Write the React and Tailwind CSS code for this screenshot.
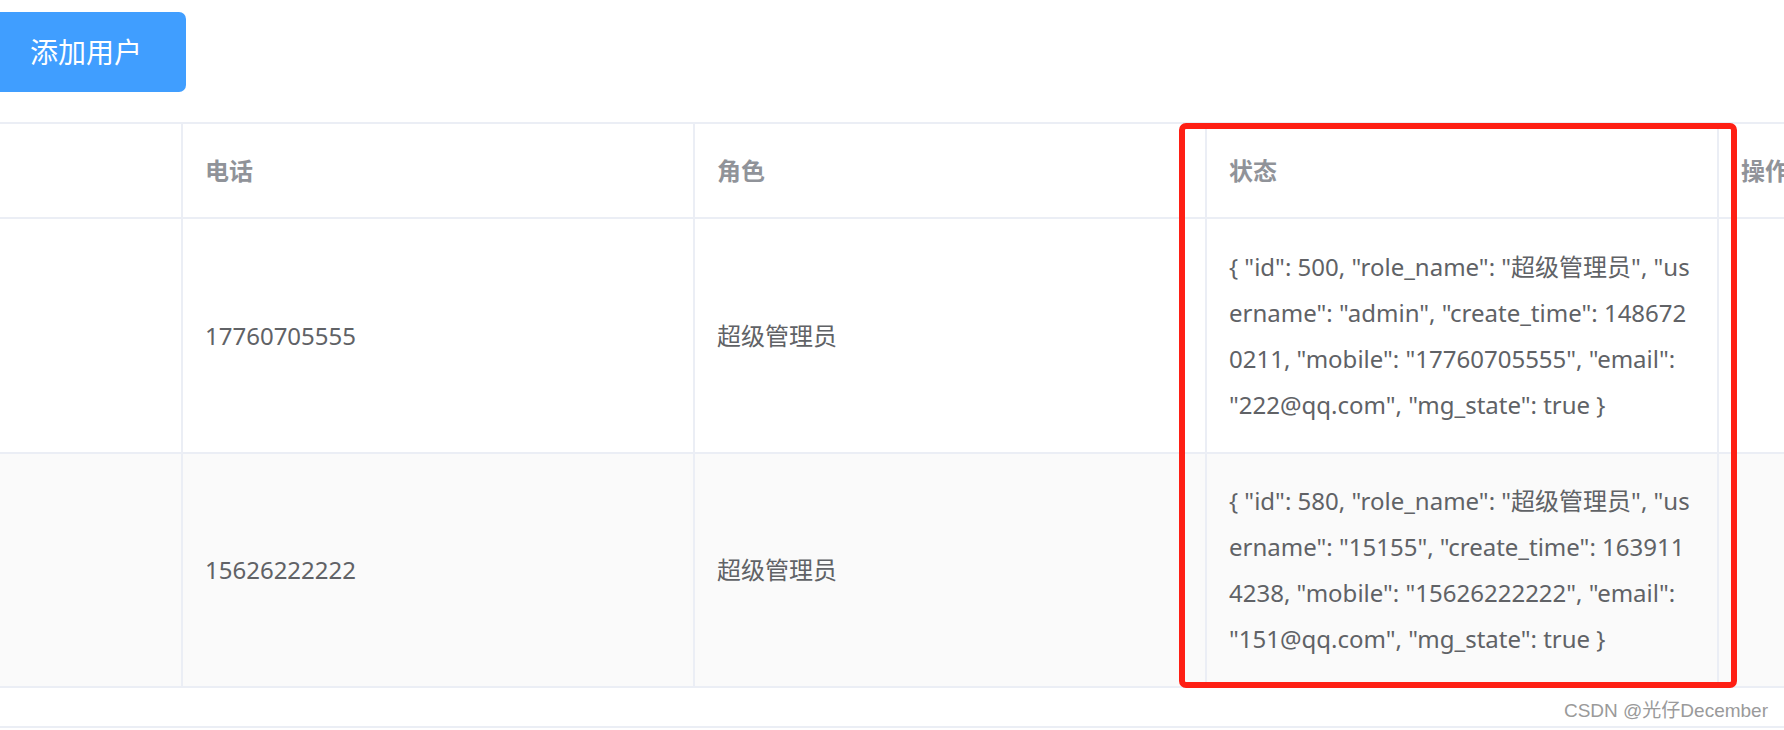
import React from "react";

const users = [
  {
    id: 500,
    role_name: "超级管理员",
    username: "admin",
    create_time: 1486720211,
    mobile: "17760705555",
    email: "222@qq.com",
    mg_state: true,
  },
  {
    id: 580,
    role_name: "超级管理员",
    username: "15155",
    create_time: 1639114238,
    mobile: "15626222222",
    email: "151@qq.com",
    mg_state: true,
  },
];

// same format element-ui shows when a row object is printed in a cell
const stringify = (u) =>
  `{ "id": ${u.id}, "role_name": "${u.role_name}", "username": "${u.username}", "create_time": ${u.create_time}, "mobile": "${u.mobile}", "email": "${u.email}", "mg_state": ${u.mg_state} }`;

const cellBase = "shrink-0 box-border flex items-center px-[22px] border-r-2 border-[#ebeef5]";

export default function App() {
  return (
    <div
      className="relative w-[1784px] h-[730px] overflow-hidden bg-white"
      style={{ fontFamily: '"Noto Sans", "Noto Sans CJK SC", sans-serif' }}
    >
      {/* toolbar */}
      <div className="pt-[12px]">
        <button className="-ml-[14px] h-[80px] px-[44px] rounded-[7px] bg-[#409eff] text-white text-[28px] leading-none">
          添加用户
        </button>
      </div>

      {/* table */}
      <div className="mt-[30px] w-[2300px] border-t-2 border-[#ebeef5]">
        <div className="flex h-[95px] border-b-2 border-[#ebeef5] text-[24px] font-bold text-[#909399] leading-[46px]">
          <div className={`${cellBase} w-[183px]`}></div>
          <div className={`${cellBase} w-[512px]`}>电话</div>
          <div className={`${cellBase} w-[512px]`}>角色</div>
          <div className={`${cellBase} w-[512px]`}>状态</div>
          <div className={`${cellBase} w-[512px]`}>操作</div>
        </div>

        {users.map((u, i) => (
          <div
            key={u.id}
            className={`flex border-b-2 border-[#ebeef5] text-[24px] text-[#606266] leading-[46px] ${
              i === 0 ? "h-[235px] bg-white" : "h-[234px] bg-[#fafafa]"
            }`}
          >
            <div className={`${cellBase} w-[183px]`}></div>
            <div className={`${cellBase} w-[512px]`}>{u.mobile}</div>
            <div className={`${cellBase} w-[512px]`}>{u.role_name}</div>
            <div className={`${cellBase} w-[512px] break-all`}>
              <div>{stringify(u)}</div>
            </div>
            <div className={`${cellBase} w-[512px]`}></div>
          </div>
        ))}
      </div>

      <div className="mt-[38px] h-[2px] bg-[#ebeef5]"></div>

      {/* annotation box around the status column */}
      <div className="absolute left-[1179px] top-[123px] w-[558px] h-[565px] border-[6px] border-[#fe1f14] rounded-[7px]"></div>

      {/* watermark */}
      <div
        className="absolute right-[16px] top-[700px] text-[19px] leading-[22px] text-[#9a9a9a]"
        style={{ fontFamily: '"Liberation Sans", "Noto Sans CJK SC", sans-serif' }}
      >
        CSDN @光仔December
      </div>
    </div>
  );
}
